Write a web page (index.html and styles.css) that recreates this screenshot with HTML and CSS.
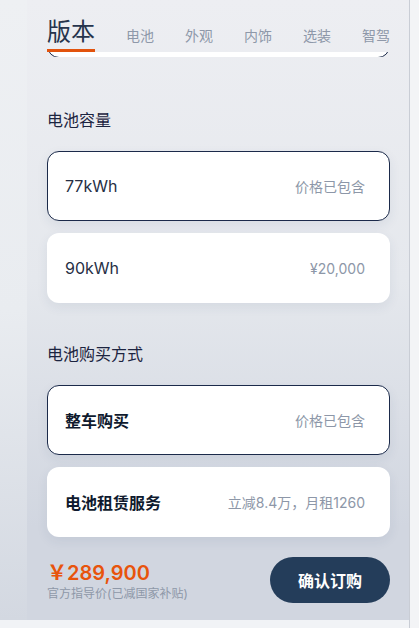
FILE: index.html
```html
<!DOCTYPE html>
<html lang="zh-CN">
<head>
    <meta charset="UTF-8">
    <meta name="viewport" content="width=device-width, initial-scale=1.0">
    <title>配置车型</title>
    <link rel="stylesheet" href="styles.css">
</head>
<body>
    <div class="screen">
        <div class="left">
            <div class="gutter"></div>
            <div class="page">
                <div class="tabs">
                    <span class="tab active">版本</span>
                    <span class="tab">电池</span>
                    <span class="tab">外观</span>
                    <span class="tab">内饰</span>
                    <span class="tab">选装</span>
                    <span class="tab">智驾</span>
                </div>
                <div class="card-tail"><div class="card-tail-inner"></div></div>

                <div class="section first">
                    <div class="section-title">电池容量</div>
                    <div class="option selected">
                        <span class="option-name">77kWh</span>
                        <span class="option-price">价格已包含</span>
                    </div>
                    <div class="option">
                        <span class="option-name">90kWh</span>
                        <span class="option-price">¥20,000</span>
                    </div>
                </div>

                <div class="section">
                    <div class="section-title">电池购买方式</div>
                    <div class="option selected">
                        <span class="option-name bold">整车购买</span>
                        <span class="option-price">价格已包含</span>
                    </div>
                    <div class="option">
                        <span class="option-name bold">电池租赁服务</span>
                        <span class="option-price">立减8.4万，月租1260</span>
                    </div>
                </div>

                <div class="order-bar">
                    <div class="total">
                        <div class="total-price"><span class="yen">￥</span>289,900</div>
                        <div class="total-note">官方指导价(已减国家补贴)</div>
                    </div>
                    <button class="order-btn">确认订购</button>
                </div>
            </div>
        </div>
        <div class="edge"></div>
    </div>
    <div class="strip"></div>
</body>
</html>
```

FILE: styles.css
```css
body {
    margin: 0;
    padding: 0;
    font-family: Inter, "Noto Sans CJK SC", sans-serif;
    background: #f3f4f6;
}

.screen {
    display: flex;
    height: 620px;
}

.left {
    display: flex;
    border-right: 1px solid #c9cdd5;
}

.gutter {
    width: 27px;
    background: linear-gradient(to bottom, #eef0f3, #e9ecf0 50%, #d3d8e1);
}

.page {
    width: 343px;
    padding: 0 19px 0 20px;
    display: flex;
    flex-direction: column;
    background: linear-gradient(to bottom, #edeef2, #e5e8ed 45%, #d1d6e0 85%);
}

.edge {
    width: 9px;
    background: #f3f4f6;
}

.tabs {
    display: flex;
    align-items: flex-end;
    gap: 31px;
    height: 52px;
}

.tab {
    font-size: 14px;
    line-height: 14px;
    color: #8e98a9;
    padding-bottom: 9px;
    white-space: nowrap;
}

.tab.active {
    font-size: 24px;
    line-height: 24px;
    color: #26344d;
    padding-bottom: 5px;
    border-bottom: 3px solid #e2530d;
}

.card-tail {
    height: 5px;
    overflow: hidden;
}

.card-tail-inner {
    height: 24px;
    margin-top: -20px;
    background: #fff;
    border: 1px solid #1b2a4a;
    border-radius: 12px;
}

.section {
    margin-top: 43px;
}

.section.first {
    margin-top: 55px;
}

.section-title {
    font-size: 16px;
    line-height: 16px;
    color: #1c2440;
    margin-bottom: 23px;
}

.option {
    height: 70px;
    box-sizing: border-box;
    display: flex;
    align-items: center;
    justify-content: space-between;
    padding: 0 24px 0 17px;
    margin-bottom: 12px;
    background: #fff;
    border: 1px solid transparent;
    border-radius: 12px;
    box-shadow: 0 4px 12px rgba(40, 60, 100, 0.08);
}

.option:last-child {
    margin-bottom: 0;
}

.option.selected {
    border-color: #1b2a4a;
}

.option-name {
    font-size: 16px;
    color: #262f45;
}

.option-name.bold {
    font-weight: bold;
    color: #0f1a2e;
}

.option-price {
    font-size: 14px;
    color: #8d97a8;
}

.order-bar {
    display: flex;
    align-items: center;
    justify-content: space-between;
    padding-top: 20px;
}

.total-price {
    font-size: 20px;
    font-weight: 600;
    color: #e8540c;
    line-height: 26px;
}

.yen {
    font-family: "Noto Sans CJK SC", sans-serif;
}

.total-note {
    font-size: 12px;
    color: #8e98a8;
    line-height: 16px;
}

.order-btn {
    width: 120px;
    height: 46px;
    border: none;
    border-radius: 23px;
    background: #243d5a;
    color: #fff;
    font-family: inherit;
    font-size: 16px;
    font-weight: bold;
    cursor: pointer;
}

.strip {
    height: 8px;
    width: 409px;
    background: #f1f3f6;
    border-right: 1px solid #c9cdd5;
}
```
